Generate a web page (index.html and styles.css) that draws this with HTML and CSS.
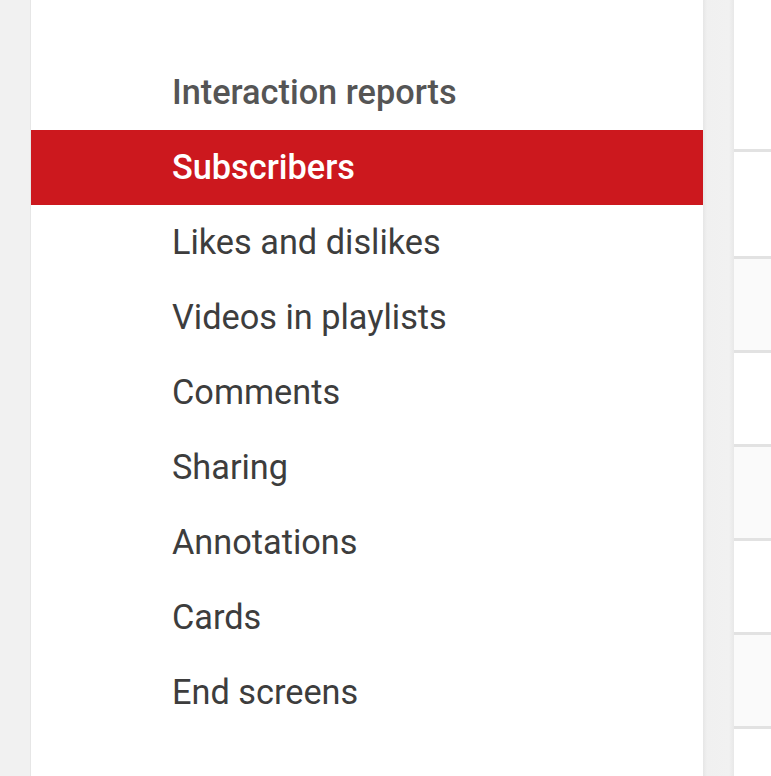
FILE: index.html
```html
<!DOCTYPE html>
<html>
<head>
<meta charset="utf-8">
<link rel="stylesheet" href="styles.css">
</head>
<body>
<div class="page">
  <nav class="menu">
    <div class="menu-header">Interaction reports</div>
    <a class="menu-item active">Subscribers</a>
    <a class="menu-item">Likes and dislikes</a>
    <a class="menu-item">Videos in playlists</a>
    <a class="menu-item">Comments</a>
    <a class="menu-item">Sharing</a>
    <a class="menu-item">Annotations</a>
    <a class="menu-item">Cards</a>
    <a class="menu-item">End screens</a>
  </nav>
  <div class="gutter"></div>
  <div class="content">
    <div class="row row-top"></div>
    <div class="row row-first"></div>
    <div class="row alt"></div>
    <div class="row"></div>
    <div class="row alt"></div>
    <div class="row"></div>
    <div class="row alt"></div>
    <div class="row row-last"></div>
  </div>
</div>
</body>
</html>
```
FILE: styles.css
```css
html, body {
  margin: 0;
  padding: 0;
  height: 100%;
  background: #f1f1f1;
  overflow: hidden;
}
.page {
  display: flex;
  height: 776px;
  overflow: hidden;
  font-family: Roboto, "Noto Sans", sans-serif;
}
.menu {
  margin-left: 30px;
  width: 672px;
  background: #fff;
  border-left: 1px solid #e6e6e6;
  padding-top: 55px;
  display: flex;
  flex-direction: column;
}
.menu-header {
  height: 75px;
  line-height: 75px;
  padding-left: 141px;
  font-size: 34.3px;
  font-weight: 500;
  color: #555;
}
.menu-item {
  display: block;
  height: 75px;
  line-height: 75px;
  padding-left: 141px;
  font-size: 34.3px;
  color: #3d3d3d;
}
.menu-item.active {
  background: #cc181e;
  color: #fff;
  font-weight: 500;
}
.gutter {
  width: 31px;
  background: linear-gradient(to right, #e6e6e6 0, #f0f0f0 4px, #f1f1f1 26px, #e8e8e8 31px);
}
.content {
  flex: 1;
  background: #fff;
  display: flex;
  flex-direction: column;
  overflow: hidden;
}
.row {
  height: 91px;
  border-bottom: 3px solid #e2e2e2;
  flex-shrink: 0;
}
.row-top {
  height: 149px;
}
.row-first {
  height: 104px;
}
.row-last {
  height: 47px;
  border-bottom: 0;
}
.row.alt {
  background: #fafafa;
}
```
